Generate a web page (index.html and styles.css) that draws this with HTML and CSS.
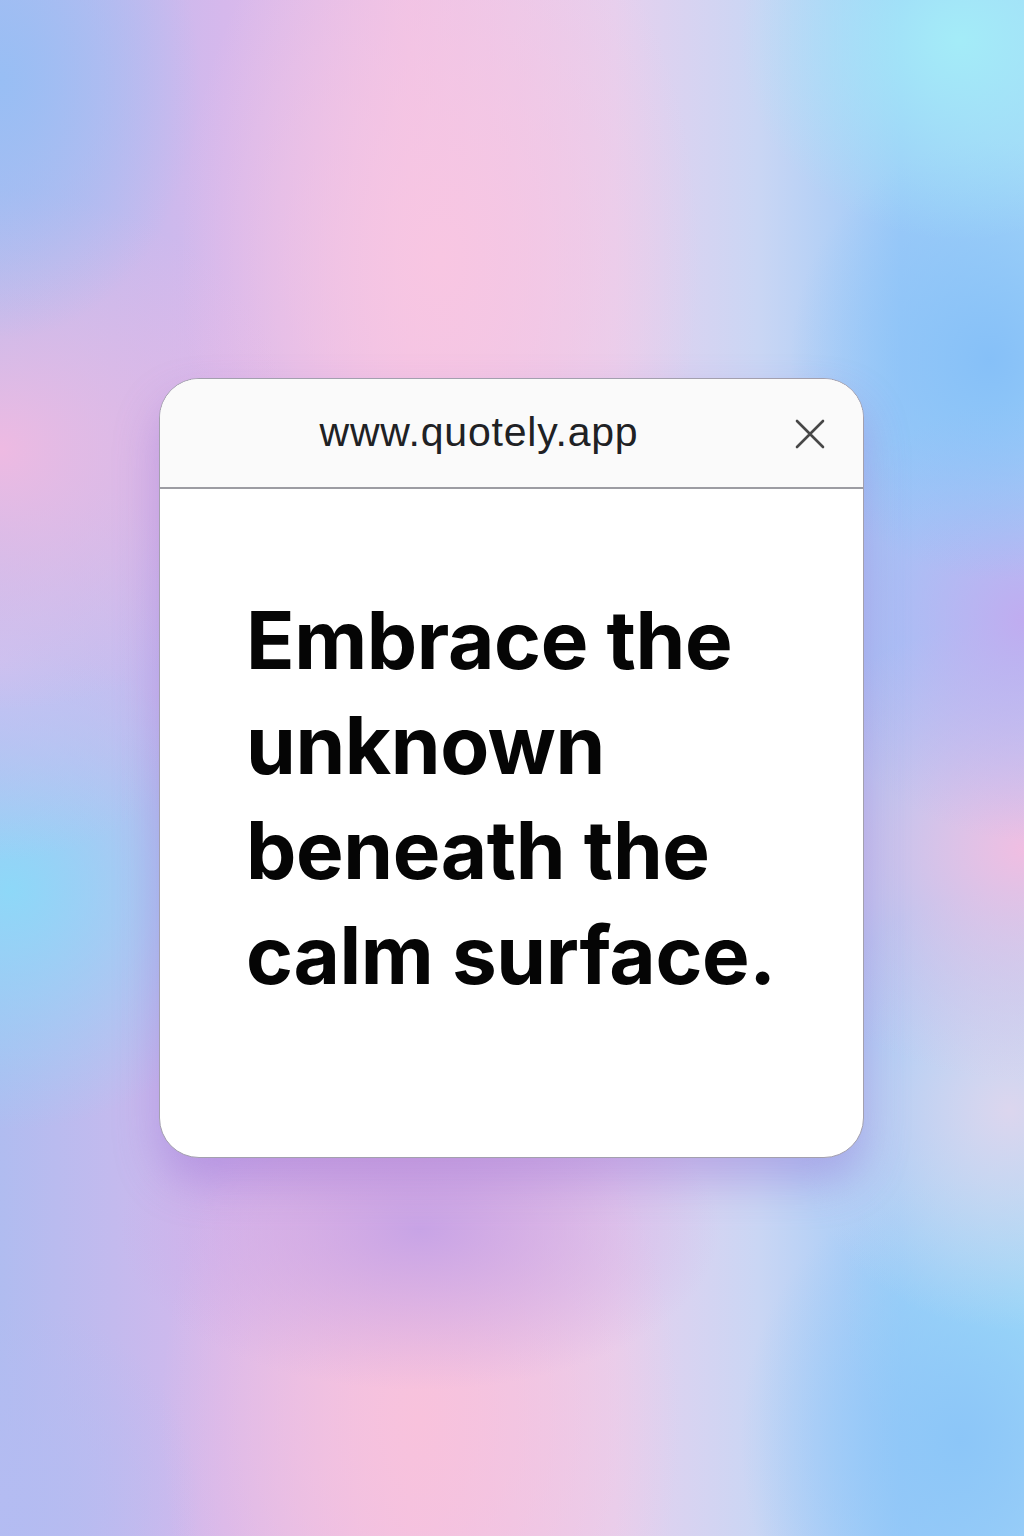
FILE: index.html
```html
<!DOCTYPE html>
<html lang="en">
<head>
<meta charset="utf-8">
<title>Quotely</title>
<link rel="stylesheet" href="styles.css">
</head>
<body>
<main class="stage">
  <section class="card">
    <header class="card-head">
      <span class="url">www.quotely.app</span>
      <button class="close" aria-label="Close">
        <svg viewBox="0 0 30 30" width="30" height="30"><path d="M2 2 L28 28 M28 2 L2 28" stroke="#474747" stroke-width="2.6" stroke-linecap="round" fill="none"/></svg>
      </button>
    </header>
    <div class="card-body">
      <p class="quote">Embrace the<br>unknown<br>beneath the<br>calm surface.</p>
    </div>
  </section>
</main>
</body>
</html>
```
FILE: styles.css
```css
html, body {
  margin: 0;
  padding: 0;
}
body {
  width: 1024px;
  height: 1536px;
  overflow: hidden;
  background-color: #dccaee;
  background-image:
    radial-gradient(ellipse 200px 260px at 0px 80px, #98bef4 0, rgba(152,190,244,0) 100%),
    radial-gradient(ellipse 220px 200px at 960px 40px, #a4ecf8 0, rgba(164,236,248,0) 100%),
    radial-gradient(ellipse 200px 220px at 990px 360px, #86c0f8 0, rgba(134,192,248,0) 100%),
    radial-gradient(ellipse 300px 260px at 0px 450px, #eebae2 0, rgba(238,186,226,0) 100%),
    radial-gradient(ellipse 220px 200px at 0px 660px, #c6c2f2 0, rgba(198,194,242,0) 100%),
    radial-gradient(ellipse 260px 240px at 10px 890px, #8ed8f8 0, rgba(142,216,248,0) 100%),
    radial-gradient(ellipse 220px 220px at 1024px 620px, #c0acf0 0, rgba(192,172,240,0) 100%),
    radial-gradient(ellipse 280px 230px at 1024px 850px, #f0bee2 0, rgba(240,190,226,0) 100%),
    radial-gradient(ellipse 220px 220px at 1010px 1110px, #dcd6ee 0, rgba(220,214,238,0) 100%),
    radial-gradient(ellipse 300px 160px at 420px 1230px, #c8a4e6 0, rgba(200,164,230,0) 100%),
    radial-gradient(ellipse 220px 260px at 960px 1440px, #8cc6f8 0, rgba(140,198,248,0) 100%),
    radial-gradient(ellipse 180px 200px at 1024px 1300px, #a0e0f8 0, rgba(160,224,248,0) 100%),
    radial-gradient(ellipse 200px 200px at 0px 1500px, #b4bcf2 0, rgba(180,188,242,0) 100%),
    radial-gradient(ellipse 260px 400px at 420px 1420px, #f8c2dc 0, rgba(248,194,220,0) 100%),
    radial-gradient(ellipse 260px 420px at 440px 260px, #f8c6e2 0, rgba(248,198,226,0) 100%),
    linear-gradient(90deg, #b0bcf0 0%, #d6b8ec 22%, #eec2e6 40%, #e6d0ee 60%, #cad6f4 74%, #9ccaf8 88%, #a2d4f8 100%);
  font-family: "Liberation Sans", Arial, sans-serif;
}
.stage {
  width: 1024px;
  height: 1536px;
  display: flex;
  align-items: center;
  justify-content: center;
}
.card {
  width: 705px;
  height: 780px;
  box-sizing: border-box;
  border: 1.5px solid #a3a0ae;
  border-radius: 40px;
  background: #ffffff;
  overflow: hidden;
  display: flex;
  flex-direction: column;
  box-shadow: 0 24px 44px rgba(140, 100, 210, 0.38);
  margin-left: -1px;
}
.card-head {
  height: 110px;
  flex: none;
  box-sizing: border-box;
  background: #fafafa;
  border-bottom: 2px solid #9c9ca2;
  display: flex;
  align-items: center;
  justify-content: center;
  position: relative;
}
.url {
  font-family: "Liberation Sans", Arial, sans-serif;
  font-size: 41px;
  color: #202124;
  letter-spacing: 0.8px;
  margin-left: -65px;
  margin-top: -1px;
}
.close {
  position: absolute;
  right: 38px;
  top: 40px;
  width: 30px;
  height: 30px;
  padding: 0;
  border: 0;
  background: none;
  display: flex;
}
.card-body {
  flex: 1;
  padding: 98px 40px 0 86px;
}
.quote {
  margin: 0;
  font-family: Inter, "Liberation Sans", sans-serif;
  font-weight: 700;
  font-size: 80px;
  line-height: 105px;
  letter-spacing: -0.4px;
  color: #050505;
}
```
